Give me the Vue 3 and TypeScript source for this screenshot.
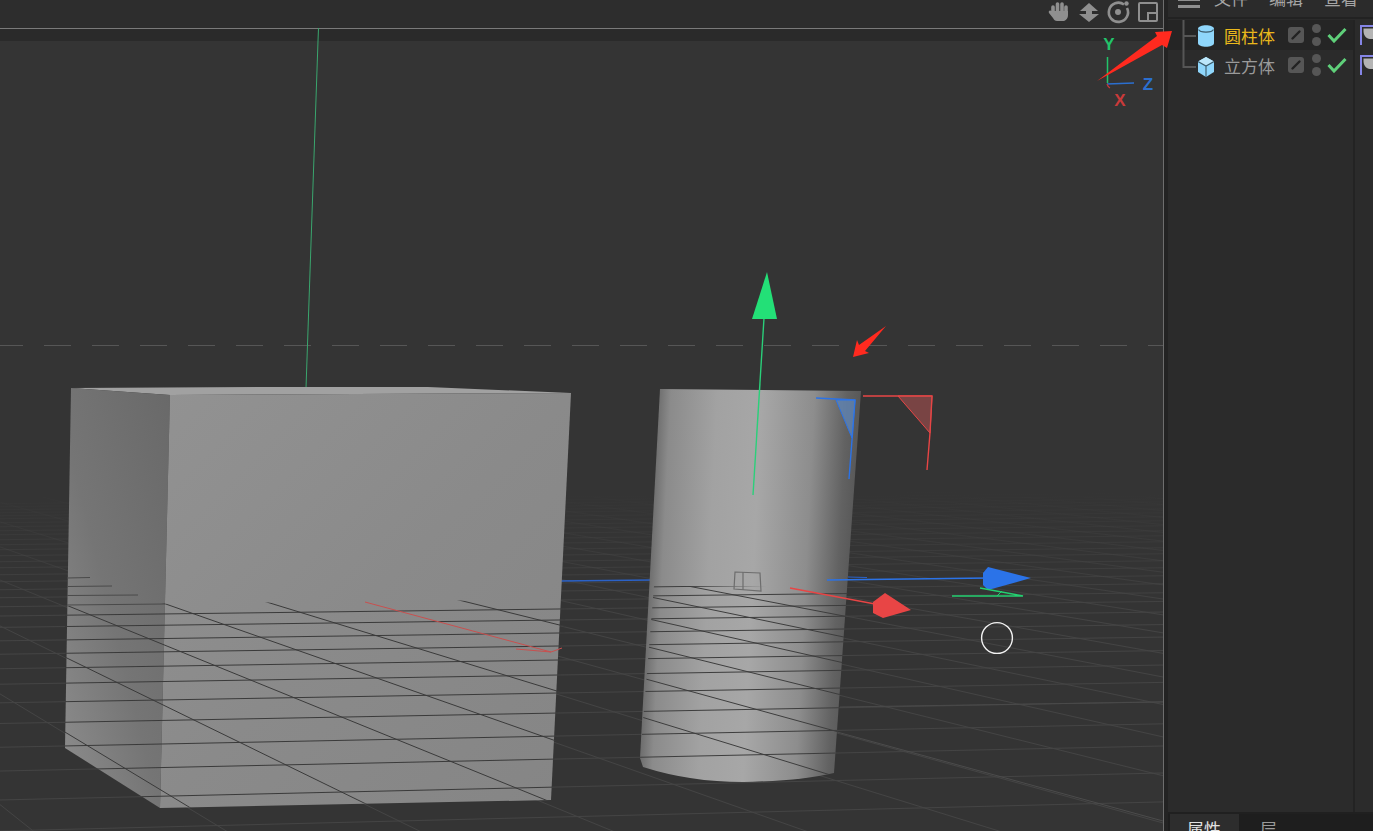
<script setup lang="ts">
// floor grid: all rays meet in one vanishing point, rows tilt a bit more the closer they get
const VP_X = -581
const VP_Y = 342

const upperRows = [497, 500, 503, 506, 509, 512, 516, 520, 524, 528, 533, 538, 543, 549, 555, 561, 568, 575, 583, 591, 600]
const objectRows = [609, 620, 633, 646, 660, 675, 693, 713, 736, 759, 787]
const lowerRows = [817, 850]

function rowLine(r: number) {
  const s = -Math.max(0.012, 0.012 + (r - 600) * 0.00006)
  return { x1: 0, y1: r + s * (0 - 559), x2: 1163, y2: r + s * (1163 - 559) }
}

function rayLine(inv: number, y1 = 497, y2 = 840) {
  return { x1: VP_X + (y1 - VP_Y) * inv, y1, x2: VP_X + (y2 - VP_Y) * inv, y2 }
}

const floorRows = [...upperRows, ...objectRows, ...lowerRows].map(rowLine)
const floorRays: ReturnType<typeof rayLine>[] = []
for (let inv = 1.256; inv < 12; inv += 0.395) floorRays.push(rayLine(inv))

const cubeRows = objectRows.map(rowLine)
const cubeRays = [1.656, 2.05, 2.46, 2.85, 3.26, 4.03].map((i) => rayLine(i, 590))
const cylRows = [588, 597, ...objectRows].map(rowLine)
const cylRays = [3.26, 3.64, 4.03, 4.44, 4.83, 5.2].map((i) => rayLine(i, 575))

const menus = ['文件', '编辑', '查看']

const objects = [
  { name: '圆柱体', kind: 'cylinder', active: true },
  { name: '立方体', kind: 'cube', active: false },
]
</script>

<template>
  <div class="app">
    <div class="view-col">
      <div class="view-toolbar">
        <svg class="nav-icons" width="112" height="28" viewBox="1048 0 112 28">
          <g class="nav-stroke" stroke-width="3.6" stroke-linecap="round">
            <line x1="1053" y1="7" x2="1053" y2="13" />
            <line x1="1057.5" y1="4" x2="1057.5" y2="12" />
            <line x1="1062" y1="4" x2="1062" y2="12" />
            <line x1="1066" y1="7" x2="1066" y2="14" />
          </g>
          <path class="nav-fill" d="M1051 11h17v4c0 4-3 6-5 6h-6c-2 0-3-1-4-3l-4-5c-1-2 1-3 2-2z" />
          <polygon class="nav-fill" points="1089,3 1098,11 1092,11 1092,14 1099,14 1089,22 1079,14 1086,14 1086,11 1080,11" />
          <path class="nav-line" stroke-width="2.6" d="M1124 4.5A9.6 9.6 0 1 0 1127 8" />
          <circle class="nav-fill" cx="1118" cy="12" r="3" />
          <circle class="nav-fill" cx="1126.5" cy="3.5" r="2.2" />
          <rect class="nav-line" x="1139" y="3" width="18" height="18" rx="1" stroke-width="2" />
          <path class="nav-line" stroke-width="2" d="M1148 21V13H1157" />
        </svg>
      </div>
      <div class="view-band"></div>
      <svg class="scene" viewBox="0 41 1163 790" preserveAspectRatio="none">
        <defs>
          <linearGradient id="floorFade" gradientUnits="userSpaceOnUse" x1="0" y1="490" x2="0" y2="620">
            <stop offset="0" stop-color="#444" stop-opacity="0" />
            <stop offset="1" stop-color="#444" />
          </linearGradient>
          <linearGradient id="cubeLeft" x1="1" y1="0" x2="0" y2="1">
            <stop offset="0" stop-color="#696969" />
            <stop offset="0.55" stop-color="#757575" />
            <stop offset="1" stop-color="#8d8d8d" />
          </linearGradient>
          <linearGradient id="cubeFront" x1="0" y1="0" x2="1" y2="1">
            <stop offset="0" stop-color="#929292" />
            <stop offset="0.5" stop-color="#8a8a8a" />
            <stop offset="1" stop-color="#858585" />
          </linearGradient>
          <linearGradient id="cylShade" gradientUnits="userSpaceOnUse" x1="648" y1="570" x2="850" y2="580">
            <stop offset="0" stop-color="#6a6a6a" />
            <stop offset="0.07" stop-color="#8b8b8b" />
            <stop offset="0.3" stop-color="#a2a2a2" />
            <stop offset="0.52" stop-color="#a7a7a7" />
            <stop offset="0.78" stop-color="#8d8d8d" />
            <stop offset="0.94" stop-color="#626262" />
            <stop offset="1" stop-color="#595959" />
          </linearGradient>
          <clipPath id="cubeClip">
            <polygon points="65,606 165,603.5 266,602.5 464,600.5 567,600 551,800 160,808 65,750" />
          </clipPath>
          <clipPath id="cylClip">
            <path d="M654 586H848L834 773Q800 781 743 782Q690 782 643 767L640 758z" />
          </clipPath>
        </defs>

        <rect x="0" y="41" width="1163" height="790" fill="#343434" />

        <g stroke="url(#floorFade)" stroke-width="1">
          <line v-for="(l, i) in floorRows" :key="'r' + i" v-bind="l" />
          <line v-for="(l, i) in floorRays" :key="'d' + i" v-bind="l" />
        </g>
        <line x1="837" y1="732" x2="1163" y2="821" stroke="#4c4c4c" />
        <line x1="840" y1="707" x2="1163" y2="702" stroke="#4a4a4a" />
        <line x1="0" y1="345.5" x2="1163" y2="345.5" stroke="#565656" stroke-dasharray="27 21" stroke-dashoffset="4" />

        <line x1="318" y1="41" x2="306" y2="388" stroke="#3aa66e" />
        <line x1="560" y1="581" x2="652" y2="580" stroke="#2b62c8" stroke-width="1.4" />

        <!-- cube -->
        <polygon points="71,388 277,387 428,387 571,393 170,395" fill="#a1a1a1" />
        <polygon points="71,388 170,395 160,808 65,748" fill="url(#cubeLeft)" />
        <polygon points="170,395 571,393 551,800 160,808" fill="url(#cubeFront)" />
        <g stroke="#3a3a3a" clip-path="url(#cubeClip)">
          <line v-for="(l, i) in cubeRows" :key="'cr' + i" v-bind="l" />
          <line v-for="(l, i) in cubeRays" :key="'cd' + i" v-bind="l" />
        </g>
        <g stroke="#4a4a4a">
          <line x1="67" y1="578" x2="90" y2="577.5" />
          <line x1="67" y1="586.5" x2="112" y2="586" />
          <line x1="67" y1="595.5" x2="138" y2="595" />
          <line x1="67" y1="605" x2="165" y2="604" />
        </g>
        <line x1="365" y1="602" x2="551" y2="652" stroke="#c8504f" />
        <polyline points="516,649 551,652 562,648" fill="none" stroke="#c8504f" />

        <!-- cylinder -->
        <path d="M660 389L861 391L834 773Q800 781 743 782Q690 782 643 767L640 758z" fill="url(#cylShade)" />
        <g stroke="#3d3d3d" clip-path="url(#cylClip)">
          <line v-for="(l, i) in cylRows" :key="'yr' + i" v-bind="l" />
          <line v-for="(l, i) in cylRays" :key="'yd' + i" v-bind="l" />
        </g>
        <g fill="none" stroke="#6d6d6d" stroke-width="1.2">
          <polygon points="735,572 760,573 761,591 734,589" />
          <polyline points="743,572 743,590" />
        </g>

        <!-- move gizmo -->
        <line x1="753" y1="495" x2="764" y2="318" stroke="#2ad07a" stroke-width="1.4" />
        <polygon points="767,272 752,319 777,319" fill="#23e077" />

        <polyline points="816,398 855,400 852,440 849,479" fill="none" stroke="#2b73e8" stroke-width="1.4" />
        <polygon points="836,400 855,400 852,438" fill="#5f86b8" fill-opacity="0.75" stroke="#2b73e8" />
        <polyline points="863,396 932,396 930,433 927,470" fill="none" stroke="#e84545" stroke-width="1.4" />
        <polygon points="898,396 932,396 930,433" fill="#a85050" fill-opacity="0.6" stroke="#e84545" />

        <line x1="827" y1="580" x2="990" y2="578" stroke="#2b73e8" stroke-width="1.6" />
        <line x1="848" y1="577" x2="867" y2="577.5" stroke="#2b62c8" />
        <polygon points="988,567 1031,578 988,590 983,585 983,573" fill="#2b73e8" />
        <polyline points="952,596 1023,596 980,588" fill="none" stroke="#23d070" stroke-width="1.4" />
        <line x1="997" y1="596" x2="1002" y2="591" stroke="#23d070" />

        <line x1="790" y1="588" x2="875" y2="604" stroke="#e84545" stroke-width="1.5" />
        <polygon points="885,593 911,610 883,618 873,613 873,602" fill="#e84545" />

        <ellipse cx="997" cy="638" rx="15.4" ry="15.4" fill="none" stroke="#f2f2f2" stroke-width="1.4" />
      </svg>
    </div>

    <div class="gutter"></div>

    <div class="panel">
      <div class="panel-menu">
        <svg class="burger" width="22" height="18" viewBox="0 0 22 18">
          <rect x="0" y="8" width="22" height="2" />
          <rect x="0" y="14" width="22" height="3" />
        </svg>
        <span v-for="m in menus" :key="m" class="menu-item">{{ m }}</span>
      </div>

      <div class="tree">
        <div class="tree-col">
          <div v-for="(o, i) in objects" :key="o.name" class="row" :class="{ active: o.active }">
            <svg class="branch" width="14" height="30" viewBox="0 0 14 30">
              <path v-if="i === 0" d="M1.5 0V30M1.5 16H14" />
              <path v-else d="M1.5 0V17H14" />
            </svg>
            <svg v-if="o.kind === 'cylinder'" class="obj-icon" width="16" height="30" viewBox="0 0 16 30">
              <path d="M0 9C0 4 16 4 16 9V23C16 28 0 28 0 23z" fill="#8fd6fb" />
              <path d="M0.5 9.5C2 13 14 13 15.5 9.5" fill="none" stroke="#3b5a6a" stroke-width="1.2" />
            </svg>
            <svg v-else class="obj-icon" width="16" height="30" viewBox="0 0 16 30">
              <polygon points="8,7 16,11.5 16,22 8,27 0,22 0,11.5" fill="#8fd6fb" />
              <polygon points="8,7 16,11.5 8,16 0,11.5" fill="#bce7fb" />
              <path d="M0 11.5L8 16L16 11.5M8 16V27" fill="none" stroke="#3b5a6a" stroke-width="1.1" />
            </svg>
            <span class="obj-name">{{ o.name }}</span>
            <svg class="edit" width="16" height="16" viewBox="0 0 16 16">
              <rect width="16" height="16" rx="3" fill="#565656" />
              <line x1="4.5" y1="11.5" x2="11.5" y2="4.5" stroke="#222" stroke-width="2.4" stroke-linecap="round" />
            </svg>
            <div class="dots"><i></i><i></i></div>
            <svg class="check" width="20" height="16" viewBox="0 0 20 16">
              <path d="M1.5 8L7 14L18.5 2" fill="none" stroke="#5fd07a" stroke-width="3" />
            </svg>
          </div>
        </div>
        <div class="tag-col">
          <div v-for="o in objects" :key="o.name" class="tag-cell">
            <svg width="14" height="20" viewBox="0 0 14 20">
              <path d="M1 20V1H14" fill="none" stroke="#8585e6" stroke-width="2" />
              <path d="M3.5 3.5H14V14H10C6 14 3.5 10 3.5 6z" fill="#b4b4b4" />
            </svg>
          </div>
        </div>
      </div>

      <div class="tabs">
        <span class="tab on">属性</span>
        <span class="tab">层</span>
      </div>
    </div>

    <!-- things that run over the panels: top of the Y axis, axis widget, red notes -->
    <svg class="overlay" viewBox="0 0 1373 831">
      <line x1="318.5" y1="28" x2="318" y2="41" stroke="#3aa66e" />
      <text x="1109" y="50" class="axis" fill="#22c46a">Y</text>
      <line x1="1107.5" y1="57" x2="1107.5" y2="83" stroke="#22c46a" stroke-width="1.5" />
      <line x1="1107" y1="84" x2="1134" y2="83" stroke="#2b6fd0" stroke-width="1.5" />
      <path d="M1107 84Q1108 87 1110 88" fill="none" stroke="#c93a3a" stroke-width="1.2" />
      <text x="1148" y="90" class="axis" fill="#2b6fd0">Z</text>
      <text x="1120" y="106" class="axis" fill="#c93a3a">X</text>
      <polygon points="1097,81 1157,36 1155,32 1172,31 1167,48 1162,45" fill="#ff2a1f" />
      <polygon points="886,326 859,345 857,340 853,357 869,353 865,351" fill="#ff2a1f" />
    </svg>
  </div>
</template>

<style scoped>
.app {
  position: relative;
  display: flex;
  width: 1373px;
  height: 831px;
  overflow: hidden;
  background: #222;
  font-family: "Liberation Sans", "Noto Sans CJK SC", sans-serif;
}

.view-col {
  display: flex;
  flex: none;
  flex-direction: column;
  box-sizing: content-box;
  width: 1163px;
  border-right: 1px solid #6e6e6e;
}

.view-toolbar {
  display: flex;
  justify-content: flex-end;
  height: 28px;
  padding-right: 3px;
  background: #2d2d2d;
  border-bottom: 1px solid #7a7a7a;
}

.nav-fill {
  fill: #8f8f8f;
}

.nav-stroke {
  stroke: #8f8f8f;
}

.nav-line {
  fill: none;
  stroke: #8f8f8f;
}

.view-band {
  height: 12px;
  background: #2a2a2a;
}

.scene {
  display: block;
  flex: 1;
  width: 100%;
  min-height: 0;
}

.gutter {
  flex: none;
  width: 4px;
  background: #232323;
}

.panel {
  display: flex;
  flex-direction: column;
  flex: 1;
  min-width: 0;
  background: #2b2b2b;
}

.panel-menu {
  display: flex;
  align-items: flex-start;
  height: 26px;
  margin-top: -9px;
  padding-left: 10px;
  border-bottom: 2px solid #222;
}

.burger {
  flex: none;
  margin-right: 14px;
  fill: #8f8f8f;
}

.menu-item {
  flex: none;
  width: 55px;
  font-size: 17px;
  line-height: 18px;
  color: #a5a5a5;
}

.tree {
  display: flex;
  flex: 1;
  min-height: 0;
  margin-top: 1px;
  border-bottom: 2px solid #202020;
}

.tree-col {
  flex: none;
  width: 185px;
}

.tag-col {
  flex: 1;
  padding-left: 5px;
  border-left: 2px solid #232323;
}

.tag-cell {
  display: flex;
  align-items: center;
  height: 30px;
}

.tag-cell svg {
  margin-top: -1px;
}

.row {
  display: flex;
  align-items: center;
  height: 30px;
  padding-left: 14px;
}

.row.active {
  background: #252525;
}

.branch {
  flex: none;
  fill: none;
  stroke: #565656;
  stroke-width: 2;
}

.obj-icon {
  flex: none;
  margin-left: 2px;
}

.obj-name {
  flex: none;
  width: 51px;
  margin-left: 10px;
  font-size: 17px;
  color: #9a9a9a;
  white-space: nowrap;
}

.row.active .obj-name {
  color: #eab81c;
}

.edit {
  flex: none;
  margin-left: 13px;
}

.dots {
  display: flex;
  flex-direction: column;
  gap: 4px;
  margin-left: 8px;
}

.dots i {
  display: block;
  width: 9px;
  height: 9px;
  border-radius: 50%;
  background: #565656;
}

.check {
  flex: none;
  margin-left: 6px;
}

.tabs {
  display: flex;
  height: 17px;
  overflow: hidden;
  padding-left: 2px;
  background: #1e1e1e;
}

.tab {
  flex: none;
  width: 69px;
  padding: 8px 0 0 17px;
  box-sizing: border-box;
  font-size: 17px;
  line-height: 18px;
  color: #9a9a9a;
}

.tab.on {
  background: #2d2d2d;
  color: #e2e2e2;
}

.tab + .tab {
  padding-left: 21px;
}

.overlay {
  position: absolute;
  inset: 0;
  width: 100%;
  height: 100%;
  pointer-events: none;
}

.axis {
  font-family: "Liberation Sans", sans-serif;
  font-size: 17px;
  font-weight: 700;
  text-anchor: middle;
}
</style>

<style>
html,
body {
  overflow: hidden;
  background: #222;
}
</style>
